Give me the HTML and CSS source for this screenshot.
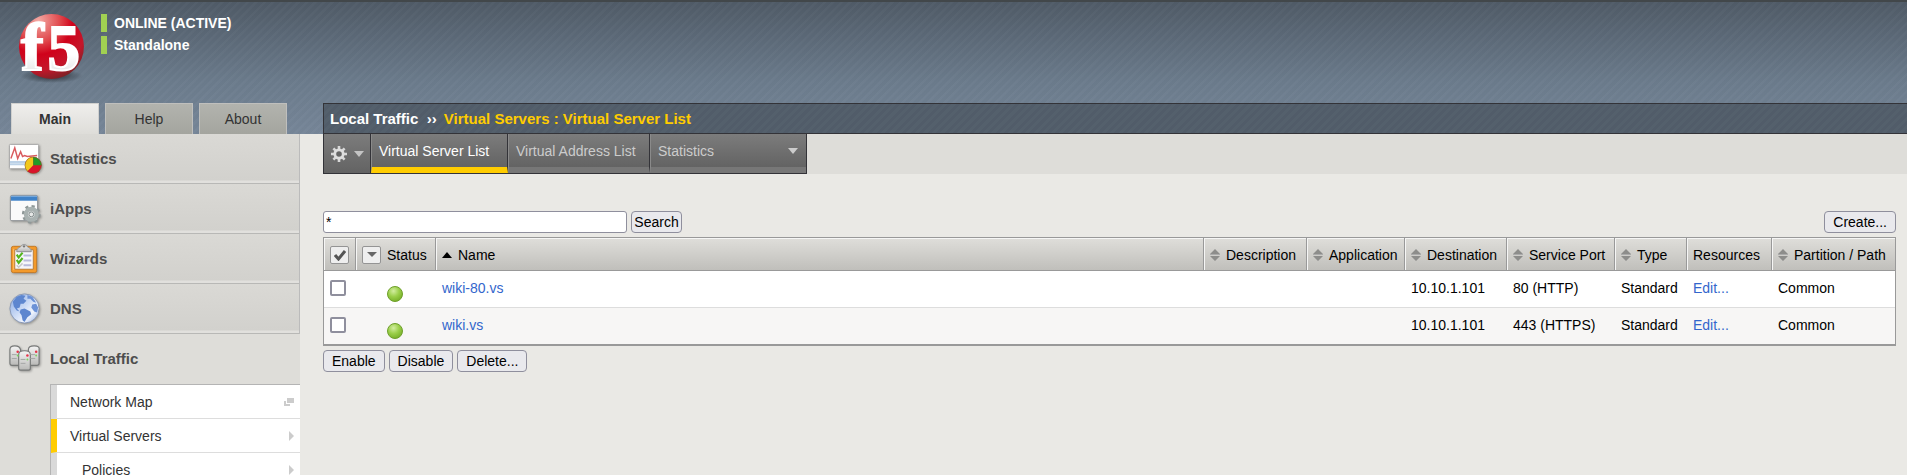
FILE: index.html
```html
<!DOCTYPE html>
<html lang="en">
<head>
<meta charset="utf-8">
<title>Virtual Server List</title>
<link rel="stylesheet" href="styles.css">
</head>
<body>
<svg class="defs" width="0" height="0" aria-hidden="true">
  <defs>
    <symbol id="sort" viewBox="0 0 10 12"><path d="M5 0l5 5H0zM5 12l5-5H0z" fill="#8d8d8b"/><path d="M0 5.500h10" stroke="#aaa" /></symbol>
    <symbol id="dot" viewBox="0 0 18 18"><circle cx="9" cy="9" r="7.500" fill="url(#green)" stroke="#6fa02c"/></symbol>
    <radialGradient id="green" cx=".4" cy=".3" r=".75"><stop offset="0" stop-color="#d2eda0"/><stop offset=".5" stop-color="#9bcf4a"/><stop offset="1" stop-color="#74ad25"/></radialGradient>
    <radialGradient id="ball" cx=".3" cy=".1" r=".95"><stop offset="0" stop-color="#f3aaa4"/><stop offset=".35" stop-color="#e0484c"/><stop offset=".55" stop-color="#d0021b"/><stop offset=".8" stop-color="#c4162a"/><stop offset="1" stop-color="#7c2226"/></radialGradient>
    <radialGradient id="shade"><stop offset="0" stop-color="#20262c" stop-opacity=".9"/><stop offset="1" stop-color="#20262c" stop-opacity="0"/></radialGradient>
    <linearGradient id="letters" x1="0" y1="0" x2="0" y2="1"><stop offset="0" stop-color="#fff"/><stop offset=".6" stop-color="#fff"/><stop offset="1" stop-color="#d5d5d5"/></linearGradient>
    <linearGradient id="metal" x1="0" y1="0" x2="0" y2="1"><stop offset="0" stop-color="#f4f4f4"/><stop offset="1" stop-color="#b9b9b7"/></linearGradient>
    <linearGradient id="globe" x1="0" y1="0" x2="1" y2="1"><stop offset="0" stop-color="#86a8e2"/><stop offset=".45" stop-color="#c9d9f5"/><stop offset=".7" stop-color="#f1f5fd"/><stop offset="1" stop-color="#8fabe0"/></linearGradient>
  </defs>
</svg>

<header class="top">
  <div class="brand-column">
    <div class="brand">
      <svg class="logo" viewBox="0 0 68 68" role="img" aria-label="f5">
        <ellipse cx="33" cy="61" rx="31" ry="7" fill="url(#shade)"/>
        <circle cx="33" cy="32" r="32" fill="url(#ball)"/>
        <text x="3" y="55" font-size="67" fill="url(#letters)" stroke="#fff" stroke-width="2">f</text>
        <text x="29" y="55" font-size="64" fill="url(#letters)" stroke="#fff" stroke-width="2">5</text>
      </svg>
      <ul class="device">
        <li>ONLINE (ACTIVE)</li>
        <li>Standalone</li>
      </ul>
    </div>
    <nav class="side-tabs">
      <a class="side-tab current" href="#main">Main</a>
      <a class="side-tab" href="#help">Help</a>
      <a class="side-tab" href="#about">About</a>
    </nav>
  </div>
  <h1 class="crumb"><span>Local Traffic&nbsp; ›› </span><span class="here">Virtual Servers : Virtual Server List</span></h1>
</header>

<div class="body">
  <nav class="sidebar">
    <a class="module" href="#statistics">
      <svg class="icon" viewBox="0 0 36 36"><rect x="2.500" y="3.500" width="30" height="25" rx="1" fill="#fff" stroke="#a5a5a5"/><path d="M3 21.500h29M3 24h29" stroke="#bcd2e8" stroke-width="2"/><path d="M4 18l4-11 3 11 3-7 2 5 2-1 3 1 10-1" fill="none" stroke="#d95a5e" stroke-width="1.500"/><circle cx="27" cy="25" r="8.500" fill="#d9132b"/><path d="M27 25V16.500A8.500 8.500 0 0 0 21 31z" fill="#f2c81c"/><path d="M27 25V16.500A8.500 8.500 0 0 1 35.500 25z" fill="#239a27"/><circle cx="27" cy="25" r="8.500" fill="none" stroke="#7a5c20" stroke-opacity=".5"/></svg>
      <span>Statistics</span></a>
    <a class="module" href="#iapps">
      <svg class="icon" viewBox="0 0 36 36"><rect x="3.500" y="4.500" width="28" height="26" rx="1.500" fill="#fafafa" stroke="#8c8f93"/><path d="M4 5h27v5H4z" fill="#3f82c8"/><path d="M4 5.500h27" stroke="#83b2e0"/><circle cx="25" cy="24" r="8.200" fill="none" stroke="#8f9898" stroke-width="3" stroke-dasharray="3.220 3.220"/><circle cx="25" cy="24" r="5.500" fill="none" stroke="#a9b2b1" stroke-width="4.500"/><circle cx="25" cy="24" r="2.500" fill="#e6e8e7" stroke="#7b8585"/></svg>
      <span>iApps</span></a>
    <a class="module" href="#wizards">
      <svg class="icon" viewBox="0 0 36 36"><rect x="4.500" y="5.500" width="26" height="27" rx="2" fill="#f39a2b" stroke="#c47a25"/><path d="M7 8v22" stroke="#ffc577"/><path d="M8 9h19v20H8z" fill="#f6f6fb" stroke="#a96e2b" stroke-width=".8"/><path d="M17 15h8M17 20h8M17 25h8" stroke="#b9bbdc" stroke-width="2"/><path d="M10 14l2 3 4-5M10 19.500l2 3 4-5" fill="none" stroke="#54b51e" stroke-width="2.200"/><path d="M10 25l2 2 4-4" fill="none" stroke="#c7c9c9" stroke-width="1.500"/><path d="M10 11c0-4 3-4 4-5a3.800 3.800 0 0 1 7 0c1 1 4 1 4 5z" fill="url(#metal)" stroke="#8d8f91"/><circle cx="17.500" cy="5.500" r="1.200" fill="#777"/></svg>
      <span>Wizards</span></a>
    <a class="module" href="#dns">
      <svg class="icon" viewBox="0 0 36 36"><circle cx="18" cy="18" r="15" fill="url(#globe)" stroke="#8898b5"/><path d="M6 11l4-5 5-2 4 1-2 3 3 2-3 3-3 0-1 4-3 1 3 3-3-1-3-4z" fill="#5d86cf"/><path d="M14 19l4-1 6 3 1 3-4 3-3 5-2-2-1-5-2-3z" fill="#5d86cf"/><path d="M21 4l5 2 4 6-3-1-3-3-3 0zM26 14l4-1 2 4-1 5-3-1-3-4z" fill="#6c92d7"/></svg>
      <span>DNS</span></a>
    <a class="module open" href="#local-traffic">
      <svg class="icon" viewBox="0 0 36 36"><g fill="url(#metal)" stroke="#777978" stroke-width="1.200"><path d="M3 23V9q0-4 5-4t6 4v14q0 2-2 2H5q-2 0-2-2zM22 23V9q0-4 6-4t5 4v14q0 2-2 2h-7q-2 0-2-2z"/><path d="M12 28V14q0-4 6-4t6 4v14q0 2-2 2h-8q-2 0-2-2z"/></g><path d="M5 14h5M5 18h5M24 14h5M24 18h5M14 19h5M14 23h5" stroke="#a4a6a5"/><g fill="#e5354a"><circle cx="11" cy="11" r="1.300"/><circle cx="30" cy="11" r="1.300"/><circle cx="21" cy="15" r="1.300"/></g><g fill="#7bd35f"><circle cx="11" cy="15" r="1"/><circle cx="30" cy="15" r="1"/><circle cx="21" cy="19" r="1"/></g></svg>
      <span>Local Traffic</span></a>
    <div class="submenu">
      <a href="#network-map"><span>Network Map</span><svg width="10" height="8" viewBox="0 0 10 8"><path d="M3 0h7v5H3z" fill="#ccc"/><path d="M1 3v4h5" fill="none" stroke="#ccc" stroke-width="2"/></svg></a>
      <a class="selected" href="#virtual-servers"><span>Virtual Servers</span><svg width="5" height="10" viewBox="0 0 5 10"><path d="M0 0l5 5-5 5z" fill="#ccc"/></svg></a>
      <a class="nested" href="#policies"><span>Policies</span><svg width="5" height="10" viewBox="0 0 5 10"><path d="M0 0l5 5-5 5z" fill="#ccc"/></svg></a>
    </div>
  </nav>

  <main class="main">
    <div class="strip">
      <nav class="tabs">
        <button class="gear" type="button" aria-label="Options">
          <svg width="16" height="16" viewBox="0 0 16 16"><g stroke="#d9d9d9" stroke-width="2.600"><path d="M8 0v16M0 8h16M2.400 2.400l11.200 11.200M13.600 2.400L2.400 13.600"/></g><circle cx="8" cy="8" r="4.200" fill="#666" stroke="#dedede" stroke-width="2.800"/></svg>
          <svg width="10" height="6" viewBox="0 0 10 6"><path d="M0 0h10L5 6z" fill="#c4c4c4"/></svg>
        </button>
        <a class="tab active" href="#list">Virtual Server List</a>
        <a class="tab" href="#addresses">Virtual Address List</a>
        <a class="tab menu" href="#stats">Statistics<svg width="10" height="6" viewBox="0 0 10 6"><path d="M0 0h10L5 6z" fill="#ccc"/></svg></a>
      </nav>
    </div>

    <form class="content" onsubmit="return false">
      <div class="tools">
        <input class="search" type="text" value="*" aria-label="Search virtual servers">
        <button class="btn tight" type="submit">Search</button>
        <button class="btn create" type="button">Create...</button>
      </div>
      <table class="list">
        <colgroup><col class="c-check"><col class="c-status"><col><col class="c-desc"><col class="c-app"><col class="c-dest"><col class="c-port"><col class="c-type"><col class="c-res"><col class="c-path"></colgroup>
        <thead>
          <tr>
            <th><button class="mini" type="button" aria-label="Select all"><svg width="12" height="12" viewBox="0 0 12 12"><path d="M1 6l3.500 4L11 2" fill="none" stroke="#555" stroke-width="3"/></svg></button></th>
            <th><div class="head"><button class="mini" type="button" aria-label="Filter status"><svg width="10" height="5" viewBox="0 0 10 5"><path d="M0 0h10L5 5z" fill="#666"/></svg></button>Status</div></th>
            <th><div class="head"><svg width="10" height="6" viewBox="0 0 10 6"><path d="M5 0l5 6H0z" fill="#000"/></svg>Name</div></th>
            <th><div class="head"><svg width="10" height="12"><use href="#sort"/></svg>Description</div></th>
            <th><div class="head"><svg width="10" height="12"><use href="#sort"/></svg>Application</div></th>
            <th><div class="head"><svg width="10" height="12"><use href="#sort"/></svg>Destination</div></th>
            <th><div class="head"><svg width="10" height="12"><use href="#sort"/></svg>Service Port</div></th>
            <th><div class="head"><svg width="10" height="12"><use href="#sort"/></svg>Type</div></th>
            <th>Resources</th>
            <th><div class="head"><svg width="10" height="12"><use href="#sort"/></svg>Partition / Path</div></th>
          </tr>
        </thead>
        <tbody>
          <tr>
            <td><input class="check" type="checkbox" aria-label="wiki-80.vs"></td>
            <td class="status"><svg width="18" height="18" role="img" aria-label="Available"><use href="#dot"/></svg></td>
            <td><a href="#wiki-80">wiki-80.vs</a></td><td></td><td></td>
            <td>10.10.1.101</td><td>80 (HTTP)</td><td>Standard</td><td><a href="#edit-80">Edit...</a></td><td>Common</td>
          </tr>
          <tr>
            <td><input class="check" type="checkbox" aria-label="wiki.vs"></td>
            <td class="status"><svg width="18" height="18" role="img" aria-label="Available"><use href="#dot"/></svg></td>
            <td><a href="#wiki">wiki.vs</a></td><td></td><td></td>
            <td>10.10.1.101</td><td>443 (HTTPS)</td><td>Standard</td><td><a href="#edit-443">Edit...</a></td><td>Common</td>
          </tr>
        </tbody>
      </table>
      <div class="actions">
        <button class="btn" type="button">Enable</button>
        <button class="btn" type="button">Disable</button>
        <button class="btn" type="button">Delete...</button>
      </div>
    </form>
  </main>
</div>
</body>
</html>
```

FILE: styles.css
```css
* { box-sizing: border-box; }
body {
  margin: 0;
  height: 100vh;
  overflow: hidden;
  background: #eae9e5;
  color: #000;
  font: 14px/20px "Liberation Sans", Arial, sans-serif;
}
a { color: #3366cc; text-decoration: none; }
button, input { font: inherit; color: inherit; }
svg { flex: none; display: block; }
.defs { position: absolute; }

/* Header */
.top {
  display: flex;
  align-items: stretch;
  border-top: 2px solid #42474a;
  background:
    repeating-linear-gradient(135deg, rgba(255,255,255,.02) 0 2px, rgba(0,0,0,.01) 3px 6px),
    linear-gradient(#505b67, #6b7b8c 60%, #768698);
}
.brand-column { width: 300px; flex: none; }
.brand { display: flex; gap: 14px; padding: 12px 0 0 18px; height: 101px; }
.logo { width: 69px; height: 69px; overflow: visible; font-family: "Liberation Serif", serif; font-weight: bold; }
.device { list-style: none; margin: 0; padding: 0; color: #fff; font-weight: bold; }
.device li { border-left: 6px solid #a1d052; padding-left: 7px; line-height: 18px; margin-bottom: 4px; }
.side-tabs { display: flex; gap: 6px; padding-left: 11px; }
.side-tab {
  width: 88px;
  height: 31px;
  border: 1px solid #bfbfbd;
  border-bottom: 0;
  background: linear-gradient(#b2b3ae, #a4a59f);
  color: #333;
  text-align: center;
  line-height: 30px;
}
.side-tab.current { background: linear-gradient(#efeeec, #deddd9); border-color: #d0d0ce; font-weight: bold; }
.crumb {
  flex: 1;
  align-self: flex-end;
  margin: 0 0 0 23px;
  padding: 1px 0 0 6px;
  border: 1px solid #333338;
  border-right: 0;
  background: repeating-linear-gradient(135deg, #54606c 0 3px, #515c69 3px 6px);
  color: #fff;
  font-size: 15px;
  line-height: 28px;
}
.crumb span { white-space: pre; }
.crumb .here { color: #fc0; margin-left: 3px; }

/* Sidebar */
.body { display: flex; align-items: stretch; min-height: calc(100vh - 134px); }
.sidebar { width: 300px; flex: none; background: #deddd9; }
.module {
  display: flex;
  align-items: center;
  gap: 8px;
  height: 50px;
  padding: 0 0 0 7px;
  border-right: 1px solid #bbb;
  border-bottom: 1px solid #b8b8b6;
  background: linear-gradient(#dad9d5, #d2d1cd 46px, #e1e0dd 47px);
  color: #4d4d4d;
  font-size: 15px;
  font-weight: bold;
}
.module.open { background: none; border-color: transparent; }
.icon { width: 35px; height: 35px; filter: drop-shadow(1px 1px 1px rgba(0,0,0,.3)); }
.submenu { margin-left: 50px; border-left: 1px solid #b4b4b4; border-top: 1px solid #b4b4b4; }
.submenu a {
  display: flex;
  align-items: center;
  justify-content: space-between;
  height: 34px;
  padding: 0 6px 0 13px;
  border-left: 6px solid #d9d9d9;
  border-bottom: 1px solid #ddd;
  background: #fff;
  color: #333;
}
.submenu a.selected { border-left-color: #fc0; }
.submenu a.nested { padding-left: 25px; }

/* Tab strip */
.main { flex: 1; min-width: 0; padding-left: 23px; }
.strip { background: #deddd9; }
.tabs { display: inline-flex; vertical-align: top; height: 40px; border: 1px solid #333338; border-top: 0; }
.gear, .tab { border: 0; border-right: 1px solid #333338; background: linear-gradient(#7c7c7c, #636363); }
.gear { display: flex; align-items: center; gap: 7px; width: 47px; padding: 0 7px; }
.tab {
  padding: 0 6px;
  border-left: 1px solid #8a8a8a;
  border-bottom: 6px solid #777;
  color: #ccc;
  line-height: 34px;
}
.tab.active { color: #fff; border-bottom-color: #fc0; width: 137px; padding-left: 7px; }
.tab:nth-child(3) { width: 142px; padding-left: 7px; }
.tab.menu { display: flex; align-items: center; justify-content: space-between; width: 156px; padding: 0 8px 0 7px; border-right: 0; }

/* List */
.content { padding: 37px 11px 0 0; }
.tools { display: flex; gap: 4px; margin-bottom: 4px; }
.search { width: 304px; height: 22px; padding: 0 2px; border: 1px solid #8f8f9d; border-radius: 3px; background: #fff; }
.btn {
  height: 22px;
  padding: 0 8px;
  border: 1px solid #8f8f9d;
  border-radius: 4px;
  background: #e9e9ed;
  line-height: 20px;
}
.btn.tight { padding: 0; width: 51px; }
.btn.create { margin-left: auto; }
.list {
  width: 100%;
  table-layout: fixed;
  border-collapse: separate;
  border-spacing: 0;
  border: 1px solid #999;
  border-bottom-width: 2px;
}
.c-check { width: 32px; }
.c-status { width: 80px; }
.c-desc { width: 103px; }
.c-app { width: 98px; }
.c-dest { width: 102px; }
.c-port { width: 108px; }
.c-type { width: 72px; }
.c-res { width: 85px; }
.c-path { width: 123px; }
.list th {
  height: 33px;
  padding: 1px 0 0 6px;
  border-right: 1px solid #999;
  border-bottom: 1px solid #999;
  background: linear-gradient(#dfdeda, #c0bfbb);
  box-shadow: inset 1px 1px #f6f6f5;
  font-weight: normal;
  text-align: left;
  white-space: nowrap;
}
.list th:last-child, .list td:last-child { border-right: 0; }
.head { display: flex; align-items: center; gap: 6px; }
.list td { height: 37px; padding: 0 0 2px 6px; background: #fff; border-bottom: 1px solid #ddd; white-space: nowrap; }
.list tbody tr:last-child td { background: #f7f6f5; height: 36px; border-bottom: 0; }
.list td.status { padding: 10px 0 0 30px; }
.mini {
  display: flex;
  align-items: center;
  justify-content: center;
  width: 19px;
  height: 18px;
  padding: 0;
  border: 1px solid #949494;
  border-radius: 2px;
  background: #eee;
}
.check {
  appearance: none;
  display: block;
  width: 16px;
  height: 16px;
  margin: 0;
  border: 2px solid #8f8f9d;
  border-radius: 2px;
  background: #fff;
}
.check:checked { background: #3366cc; }
.actions { display: flex; gap: 4px; margin-top: 4px; }
```
